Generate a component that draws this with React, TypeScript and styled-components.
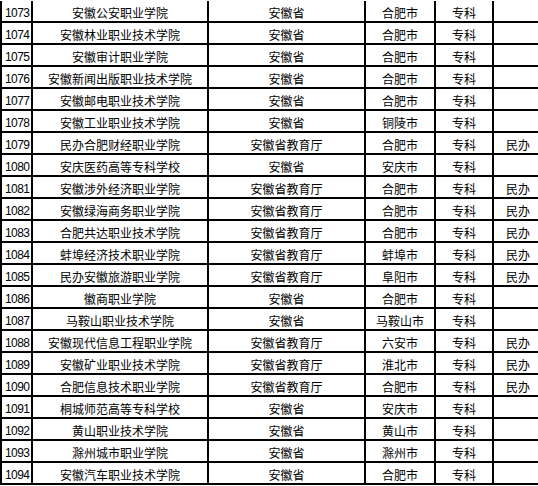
import styled, { createGlobalStyle } from 'styled-components';

interface School {
  no: number;
  name: string;
  dept: string;
  city: string;
  level: string;
  note: string;
}

const G = '安徽省';
const E = '安徽省教育厅';

const schools: School[] = [
  { no: 1073, name: '安徽公安职业学院', dept: G, city: '合肥市', level: '专科', note: '' },
  { no: 1074, name: '安徽林业职业技术学院', dept: G, city: '合肥市', level: '专科', note: '' },
  { no: 1075, name: '安徽审计职业学院', dept: G, city: '合肥市', level: '专科', note: '' },
  { no: 1076, name: '安徽新闻出版职业技术学院', dept: G, city: '合肥市', level: '专科', note: '' },
  { no: 1077, name: '安徽邮电职业技术学院', dept: G, city: '合肥市', level: '专科', note: '' },
  { no: 1078, name: '安徽工业职业技术学院', dept: G, city: '铜陵市', level: '专科', note: '' },
  { no: 1079, name: '民办合肥财经职业学院', dept: E, city: '合肥市', level: '专科', note: '民办' },
  { no: 1080, name: '安庆医药高等专科学校', dept: G, city: '安庆市', level: '专科', note: '' },
  { no: 1081, name: '安徽涉外经济职业学院', dept: E, city: '合肥市', level: '专科', note: '民办' },
  { no: 1082, name: '安徽绿海商务职业学院', dept: E, city: '合肥市', level: '专科', note: '民办' },
  { no: 1083, name: '合肥共达职业技术学院', dept: E, city: '合肥市', level: '专科', note: '民办' },
  { no: 1084, name: '蚌埠经济技术职业学院', dept: E, city: '蚌埠市', level: '专科', note: '民办' },
  { no: 1085, name: '民办安徽旅游职业学院', dept: E, city: '阜阳市', level: '专科', note: '民办' },
  { no: 1086, name: '徽商职业学院', dept: G, city: '合肥市', level: '专科', note: '' },
  { no: 1087, name: '马鞍山职业技术学院', dept: G, city: '马鞍山市', level: '专科', note: '' },
  { no: 1088, name: '安徽现代信息工程职业学院', dept: E, city: '六安市', level: '专科', note: '民办' },
  { no: 1089, name: '安徽矿业职业技术学院', dept: E, city: '淮北市', level: '专科', note: '民办' },
  { no: 1090, name: '合肥信息技术职业学院', dept: E, city: '合肥市', level: '专科', note: '民办' },
  { no: 1091, name: '桐城师范高等专科学校', dept: G, city: '安庆市', level: '专科', note: '' },
  { no: 1092, name: '黄山职业技术学院', dept: G, city: '黄山市', level: '专科', note: '' },
  { no: 1093, name: '滁州城市职业学院', dept: G, city: '滁州市', level: '专科', note: '' },
  { no: 1094, name: '安徽汽车职业技术学院', dept: G, city: '合肥市', level: '专科', note: '' },
];

function App() {
  return (
    <>
      <GlobalStyle />
      <Table>
        {schools.map((s) => (
          <Row key={s.no}>
            <NoCell>{s.no}</NoCell>
            <Cell>{s.name}</Cell>
            <Cell>{s.dept}</Cell>
            <Cell>{s.city}</Cell>
            <Cell>{s.level}</Cell>
            <Cell>{s.note}</Cell>
          </Row>
        ))}
      </Table>
    </>
  );
}

export default App;

const GlobalStyle = createGlobalStyle`
  html, body {
    margin: 0;
    padding: 0;
    background: #fff;
    overflow: hidden;
  }
`;

// вся таблица, левая рамка
const Table = styled.div`
  width: 540px;
  margin-top: 1px;
  border-left: 2px solid #000;
  display: flex;
  flex-direction: column;
`;

// одна строка, линии между ячейками через gap
const Row = styled.div`
  display: grid;
  grid-template-columns: 29px 174px 155px 68px 56px 1fr;
  column-gap: 2px;
  height: 20px;
  background: #000;
  border-bottom: 2px solid #000;
`;

const Cell = styled.div`
  background: #fff;
  color: #000;
  font-family: "Noto Sans CJK SC", "Noto Sans", sans-serif;
  font-size: 12px;
  line-height: 20px;
  padding-top: 2px;
  height: 18px;
  text-align: center;
  white-space: nowrap;
  overflow: hidden;
`;

const NoCell = styled(Cell)`
  font-family: "Liberation Sans", Arial, sans-serif;
  text-align: left;
  padding-left: 3px;
  letter-spacing: -0.6px;
`;
